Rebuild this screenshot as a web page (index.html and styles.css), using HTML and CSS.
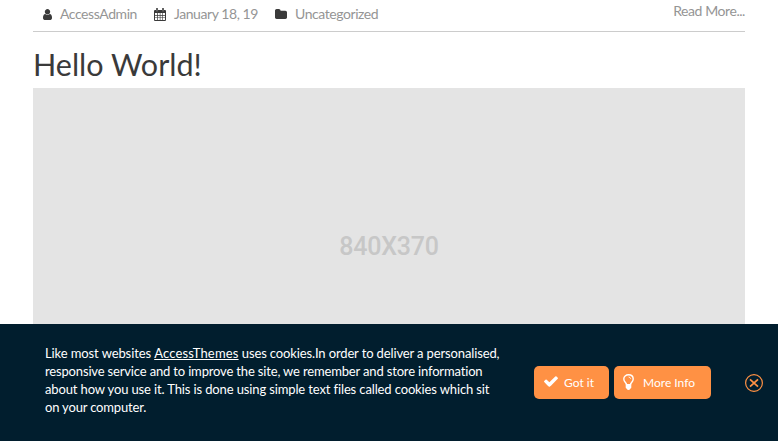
FILE: index.html
```html
<!DOCTYPE html>
<html lang="en">
<head>
<meta charset="utf-8">
<title>Hello World!</title>
<link rel="stylesheet" href="styles.css">
</head>
<body>
<main class="content">
  <div class="meta">
    <span class="item author"><svg class="user" viewBox="256 128 1280 1536"><path d="M1536 1399q0 109-62.5 187t-150.5 78h-854q-88 0-150.5-78t-62.5-187q0-85 8.5-160.5t31.5-152 58.5-131 94-89 134.5-34.5q131 128 313 128t313-128q76 0 134.5 34.5t94 89 58.5 131 31.5 152 8.5 160.5zm-256-887q0 159-112.5 271.5t-271.5 112.5-271.5-112.5-112.5-271.5 112.5-271.5 271.5-112.5 271.5 112.5 112.5 271.5z"/></svg><span class="t-author">AccessAdmin</span></span>
    <span class="item date"><svg class="calendar" viewBox="0 0 12 13"><path fill-rule="evenodd" d="M1 2H2V.7Q2 0 3 0T4 .7V2H8V.7Q8 0 9 0T10 .7V2H11Q12 2 12 3V12Q12 13 11 13H1Q0 13 0 12V3Q0 2 1 2ZM1 5V7H3V5ZM3.7 5V7H5.8V5ZM6.4 5V7H8.4V5ZM9 5V7H11V5ZM1 7.7V9.4H3V7.7ZM3.7 7.7V9.4H5.8V7.7ZM6.4 7.7V9.4H8.4V7.7ZM9 7.7V9.4H11V7.7ZM1 10.1V12H3V10.1ZM3.7 10.1V12H5.8V10.1ZM6.4 10.1V12H8.4V10.1ZM9 10.1V12H11V10.1ZM2.8 1V3.5H3.2V1ZM8.8 1V3.5H9.2V1Z"/></svg><span class="t-date">January 18, 19</span></span>
    <span class="item category"><svg class="folder" viewBox="64 128 1664 1408" preserveAspectRatio="none"><path d="M1728 608v704q0 92-66 158t-158 66h-1216q-92 0-158-66t-66-158v-960q0-92 66-158t158-66h320q92 0 158 66t66 158v32h672q92 0 158 66t66 158z"/></svg><span class="t-category">Uncategorized</span></span>
    <span class="more">Read More...</span>
  </div>
  <h1><span>Hello World!</span></h1>
  <div class="placeholder"><span>840X370</span></div>
</main>
<aside class="cookie">
  <p>
    <span class="line l1"><span class="lead">Like most websites </span><a>AccessThemes</a> uses cookies.In order to deliver a personalised,</span>
    <span class="line l2">responsive service and to improve the site, we remember and store information</span>
    <span class="line l3">about how you use it. This is done using simple text files called cookies which sit</span>
    <span class="line l4">on your computer.</span>
  </p>
  <div class="btn got"><svg class="check" viewBox="121 332 1550 1190"><path d="M1671 566q0 40-28 68l-724 724-136 136q-28 28-68 28t-68-28l-136-136-362-362q-28-28-28-68t28-68l136-136q28-28 68-28t68 28l294 295 656-657q28-28 68-28t68 28l136 136q28 28 28 68z"/></svg><span>Got it</span></div>
  <div class="btn info"><svg class="bulb" viewBox="0 0 11 16"><path class="outline" d="M3.5 10.4C3.4 8.7 .8 7.9 .8 5C.8 2.4 2.9.8 5.5.8S10.2 2.4 10.2 5C10.2 7.9 7.6 8.7 7.5 10.4"/><path class="glint" d="M5.6 3Q7.4 3.2 7.7 4.8"/><path d="M2.7 10H8.3V13.6Q8.3 14.5 7.2 14.8Q6.8 16 5.5 16T3.8 14.8Q2.7 14.5 2.7 13.6Z"/></svg><span>More Info</span></div>
  <svg class="close" viewBox="0 0 18 18"><circle cx="9" cy="9" r="8.4"/><path d="M5 5.3L13 12.7M13 5.3L5 12.7"/></svg>
</aside>
</body>
</html>
```
FILE: styles.css
```css
* { box-sizing: border-box; }
body {
  margin: 0;
  height: 441px;
  overflow: hidden;
  background: #fff;
  font-family: Lato, "Liberation Sans", sans-serif;
  display: flex;
  flex-direction: column;
}
svg { display: block; flex: none; }
.content { height: 324px; padding: 0 33px; }
.meta {
  height: 32px;
  border-bottom: 1px solid #ccc;
  display: flex;
  align-items: flex-start;
  color: #959595;
  font-size: 14px;
  letter-spacing: -0.43px;
  line-height: 20px;
  white-space: nowrap;
}
.item { display: flex; padding-top: 4px; }
.item svg { fill: #3a3a3a; }
.author { width: 121px; padding-left: 10px; }
.date { width: 121px; }
.user { width: 9px; height: 11px; margin: 5px 8px 0 0; }
.calendar { width: 12px; height: 13px; margin: 4px 8px 0 0; }
.folder { width: 12px; height: 10px; margin: 5px 8px 0 0; }
.more { margin-left: auto; padding-top: 1px; }
h1 {
  margin: 0;
  height: 56px;
  padding-top: 12px;
  color: #3a3a3a;
  font-size: 30.5px;
  font-weight: 400;
  line-height: 40px;
}
.placeholder {
  height: 236px;
  padding-top: 143px;
  background: #e4e4e4;
  color: #c7c7c7;
  font: 500 25px/32px Roboto, "Liberation Sans", sans-serif;
  letter-spacing: -0.25px;
  text-align: center;
}
.cookie {
  height: 117px;
  padding: 0 15px 0 45px;
  background: #011e2e;
  color: #fff;
  display: flex;
  align-items: center;
}
.cookie p { margin: 0; width: 489px; font-size: 13px; line-height: 18px; height: 78px; }
.line { display: block; width: max-content; white-space: nowrap; }
.line a { text-decoration: underline; letter-spacing: 0.17px; }
.l1 { letter-spacing: -0.13px; }
.lead { letter-spacing: -0.1px; }
.l2 { letter-spacing: -0.16px; }
.l3 { letter-spacing: -0.13px; }
.l4 { letter-spacing: -0.17px; }
.btn {
  height: 33px;
  border-radius: 5px;
  background: #ff9144;
  display: flex;
  font-size: 12px;
  line-height: 34px;
  white-space: nowrap;
}
.btn svg { fill: #fff; }
.got { width: 75px; margin-right: 5px; padding-left: 10px; }
.check { width: 14px; height: 11px; margin: 10px 6px 0 0; }
.info { width: 97px; padding-left: 9px; }
.bulb { width: 11px; height: 16px; margin: 8px 9px 0 0; }
.bulb .outline { fill: none; stroke: #fff; stroke-width: 1.4; }
.bulb .glint { fill: none; stroke: #fff; stroke-width: 0.8; }
.close { width: 18px; height: 18px; margin-left: auto; fill: none; stroke: #ff9144; stroke-width: 1.2; }
.close path { stroke-width: 1.8; }
```
